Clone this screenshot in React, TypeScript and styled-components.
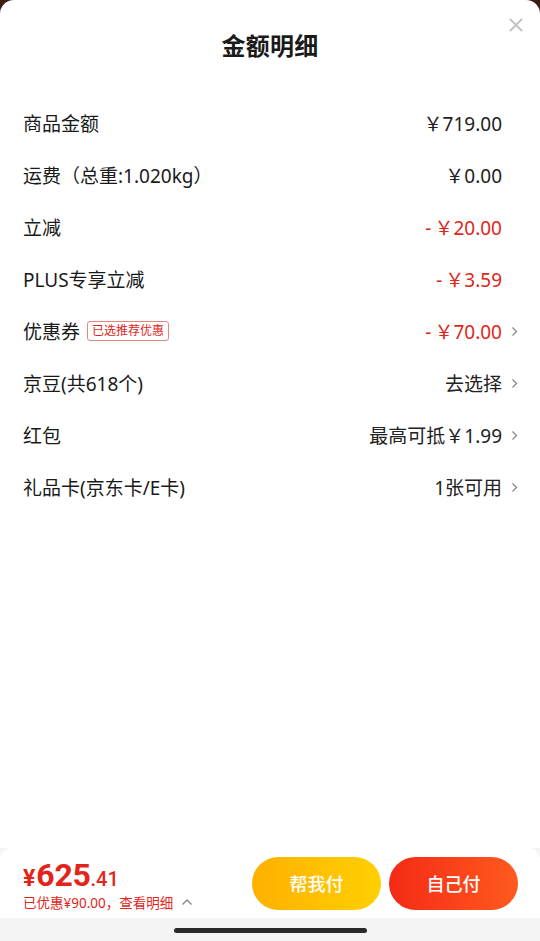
import styled, { createGlobalStyle } from "styled-components";

const GlobalStyle = createGlobalStyle`
  html, body {
    margin: 0;
    padding: 0;
    height: 100%;
  }
  body {
    font-family: "Noto Sans", "Noto Sans CJK SC", sans-serif;
    background: #3b1d12;
  }
  #root {
    height: 100%;
  }
`;

type Row = {
  label: string;
  value: string;
  red?: boolean;
  tag?: string;
  arrow?: boolean;
};

const rows: Row[] = [
  { label: "商品金额", value: "￥719.00" },
  { label: "运费（总重:1.020kg）", value: "￥0.00" },
  { label: "立减", value: "-￥20.00", red: true },
  { label: "PLUS专享立减", value: "-￥3.59", red: true },
  { label: "优惠券", value: "-￥70.00", red: true, tag: "已选推荐优惠", arrow: true },
  { label: "京豆(共618个)", value: "去选择", arrow: true },
  { label: "红包", value: "最高可抵￥1.99", arrow: true },
  { label: "礼品卡(京东卡/E卡)", value: "1张可用", arrow: true },
];

export default function App() {
  return (
    <>
      <GlobalStyle />
      <Sheet>
        <Header>
          <Title>金额明细</Title>
          <CloseButton aria-label="关闭">
            <svg width="14" height="14" viewBox="0 0 14 14">
              <path d="M1.5 1.5 L12.5 12.5 M12.5 1.5 L1.5 12.5" stroke="#c4c4c4" strokeWidth="2" strokeLinecap="round" />
            </svg>
          </CloseButton>
        </Header>
        <List>
          {rows.map((r) => (
            <Item key={r.label}>
              <Label>
                {r.label}
                {r.tag && <Tag>{r.tag}</Tag>}
              </Label>
              <Value $red={r.red}>
                {r.value.startsWith("-") ? (
                  <>
                    <Minus>-</Minus>
                    {r.value.slice(1)}
                  </>
                ) : (
                  r.value
                )}
              </Value>
              <Arrow>
                {r.arrow && (
                  <svg width="7" height="11" viewBox="0 0 7 11">
                    <path d="M1.5 1.5 L5.5 5.5 L1.5 9.5" fill="none" stroke="#888" strokeWidth="1.3" />
                  </svg>
                )}
              </Arrow>
            </Item>
          ))}
        </List>
        <Footer>
          <PayBar>
            <Summary>
              <Price>
                <Yen>¥</Yen>
                <Int>625</Int>
                <Dec>.41</Dec>
              </Price>
              <Saved>
                已优惠¥90.00，查看明细
                <svg width="12" height="8" viewBox="0 0 12 8">
                  <path d="M1.5 6.5 L6 2 L10.5 6.5" fill="none" stroke="#888" strokeWidth="1.4" />
                </svg>
              </Saved>
            </Summary>
            <PayButton $variant="help">帮我付</PayButton>
            <PayButton $variant="self">自己付</PayButton>
          </PayBar>
          <HomeArea>
            <HomeIndicator />
          </HomeArea>
        </Footer>
      </Sheet>
    </>
  );
}

const Sheet = styled.div`
  height: 100%;
  background: #fff;
  border-radius: 14px 14px 0 0;
  display: flex;
  flex-direction: column;
  box-sizing: border-box;
`;

const Header = styled.div`
  position: relative;
  height: 88px;
  display: flex;
  align-items: center;
  justify-content: center;
`;

const Title = styled.h1`
  margin: 0;
  font-size: 24px;
  font-weight: 700;
  color: #1a1a1a;
  letter-spacing: 0.3px;
`;

const CloseButton = styled.div`
  position: absolute;
  top: 18px;
  right: 17px;
  width: 14px;
  height: 14px;
  display: flex;
`;

const List = styled.div`
  flex: 1;
  display: flex;
  flex-direction: column;
  padding: 9px 0 0 23px;
`;

const Item = styled.div`
  display: flex;
  align-items: center;
  height: 52px;
`;

const Label = styled.div`
  flex: 1;
  display: flex;
  align-items: center;
  font-size: 19px;
  color: #1a1a1a;
`;

const Tag = styled.span`
  margin-left: 7px;
  padding: 0 4px;
  height: 18px;
  line-height: 18px;
  border: 1px solid #e8857c;
  border-radius: 3px;
  font-size: 12px;
  color: #e1251b;
`;

const Value = styled.div<{ $red?: boolean }>`
  font-size: 19px;
  color: ${(p) => (p.$red ? "#e1251b" : "#222")};
`;

const Minus = styled.span`
  margin-right: 3px;
`;

const Arrow = styled.div`
  width: 38px;
  display: flex;
  align-items: center;
  padding-left: 9px;
  box-sizing: border-box;
`;

const Footer = styled.div`
  background: #f4f4f4;
  display: flex;
  flex-direction: column;
`;

const PayBar = styled.div`
  height: 70px;
  background: #fff;
  border-radius: 12px 12px 0 0;
  display: flex;
  align-items: center;
  padding: 0 22px 0 23px;
  gap: 8px;
`;

const Summary = styled.div`
  flex: 1;
  display: flex;
  flex-direction: column;
  color: #e1251b;
  padding-top: 4px;
`;

const Price = styled.div`
  display: flex;
  align-items: baseline;
  font-family: "Roboto", "Noto Sans", sans-serif;
  font-weight: 700;
  line-height: 1;
  height: 30px;
`;

const Yen = styled.span`
  font-size: 23px;
  margin-right: 1px;
`;

const Int = styled.span`
  font-size: 32px;
  letter-spacing: -0.3px;
`;

const Dec = styled.span`
  font-size: 20px;
  font-weight: 500;
`;

const Saved = styled.div`
  display: flex;
  align-items: center;
  gap: 8px;
  font-size: 13.5px;
  margin-top: 3px;
`;

const PayButton = styled.div<{ $variant: "help" | "self" }>`
  width: 129px;
  height: 53px;
  border-radius: 27px;
  display: flex;
  align-items: center;
  justify-content: center;
  color: #fff;
  font-size: 18px;
  font-weight: 500;
  background: ${(p) =>
    p.$variant === "help"
      ? "linear-gradient(90deg, #ffb000, #ffd000)"
      : "linear-gradient(90deg, #f52a16, #ff5a1e)"};
`;

const HomeArea = styled.div`
  height: 23px;
  display: flex;
  align-items: center;
  justify-content: center;
`;

const HomeIndicator = styled.div`
  width: 193px;
  height: 5px;
  border-radius: 3px;
  background: #2a2a2a;
  margin-top: 2px;
`;
